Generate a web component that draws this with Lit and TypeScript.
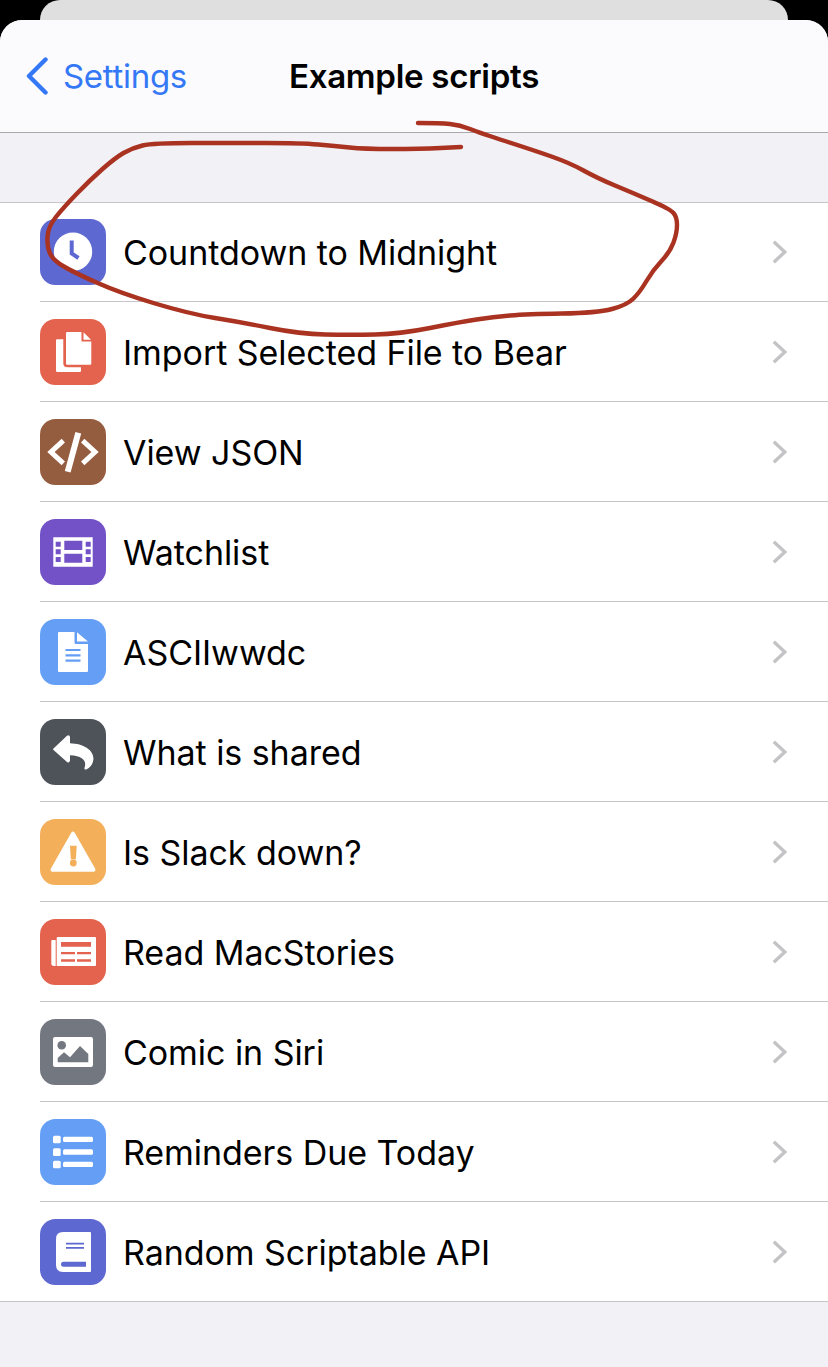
import { LitElement, css, html, svg } from 'lit';
import { customElement } from 'lit/decorators.js';

const INDIGO = '#5d68d0';
const RED = '#e4634e';
const BROWN = '#955d3f';
const PURPLE = '#7351c7';
const BLUE = '#659ff5';
const SLATE = '#4d5359';
const ORANGE = '#f3af5a';
const GREY = '#737780';

// glyphs are drawn in the 66x66 box of the rounded tile
const rows = [
  {
    name: 'Countdown to Midnight',
    color: INDIGO,
    glyph: svg`<circle cx="33" cy="32.7" r="19.2" fill="#fff"/>
      <path d="M31.7 21.5V34.5L38.5 39" fill="none" stroke="${INDIGO}" stroke-width="4"/>`,
  },
  {
    name: 'Import Selected File to Bear',
    color: RED,
    glyph: svg`<path d="M16 21.5q0-1.2 1.2-1.2H23.3V44.3q0 4 4 4H41V51.8q0 1.2-1.2 1.2H17.2q-1.2 0-1.2-1.2z" fill="#fff"/>
      <path d="M26 14.2q0-1.2 1.2-1.2H41.5V22.5H51.3V44.5q0 1.2-1.2 1.2H27.2q-1.2 0-1.2-1.2z" fill="#fff"/>
      <path d="M43.5 13.3L51 20.8H43.5z" fill="#fff"/>`,
  },
  {
    name: 'View JSON',
    color: BROWN,
    glyph: svg`<path d="M23.3 21.7L11 33L23.3 44.3M42.7 21.7L55 33L42.7 44.3" fill="none" stroke="#fff" stroke-width="5"/>
      <path d="M38.3 13.7L27.7 52.7" fill="none" stroke="#fff" stroke-width="6"/>`,
  },
  {
    name: 'Watchlist',
    color: PURPLE,
    glyph: svg`<path fill-rule="evenodd" fill="#fff" d="M13.3 18.3H52.7V47.7H13.3z
      M15.7 22.7h5v5h-5z M15.7 30.3h5v5h-5z M15.7 38h5v5h-5z
      M45.7 22.7h5v5h-5z M45.7 30.3h5v5h-5z M45.7 38h5v5h-5z
      M24.3 21.7h18v9.3h-18z M24.3 34.7h18v9h-18z"/>`,
  },
  {
    name: 'ASCIIwwdc',
    color: BLUE,
    glyph: svg`<path d="M18 14q0-1 1-1H34.5V23.5q0 1.5 1.5 1.5H48V52q0 1-1 1H19q-1 0-1-1z" fill="#fff"/>
      <path d="M37 13.3L48 22.5H37z" fill="#fff"/>
      <path d="M25.5 31h15M25.5 36.3h15M25.5 41.7h15" stroke="${BLUE}" stroke-width="2.2"/>`,
  },
  {
    name: 'What is shared',
    color: SLATE,
    glyph: svg`<path d="M13.5 29.5L27 16.7q2.4-1.6 3 1.3V24.2C44 24.6 54.2 31.5 53.4 40.5 53 45 50 49 46.3 50.4q-2.6.6-1.7-2C46.6 43 44 36.8 30 36.3V41.8q-.8 2.8-3 1.3L13.5 31q-.8-.8 0-1.5z" fill="#fff"/>`,
  },
  {
    name: 'Is Slack down?',
    color: ORANGE,
    glyph: svg`<path d="M33 14.7L53.5 50.7H12.5z" fill="#fff" stroke="#fff" stroke-width="4" stroke-linejoin="round"/>
      <path d="M30 26.7h6.7L35.9 40.3H30.8z" fill="${ORANGE}"/>
      <circle cx="33.3" cy="44" r="3.4" fill="${ORANGE}"/>`,
  },
  {
    name: 'Read MacStories',
    color: RED,
    glyph: svg`<path d="M16.7 19q0-1 1-1H55q1 0 1 1V46q0 1-1 1H16.7z" fill="#fff"/>
      <path d="M11.3 22q0-1 1-1h3.4V47H14q-2.7 0-2.7-2.7z" fill="#fff"/>
      <path d="M21 23h30v4.7H21zM21 33h14v2.3H21zM37 33h14v2.3H37zM21 40.3h14v2.4H21zM37 40.3h14v2.4H37z" fill="${RED}"/>`,
  },
  {
    name: 'Comic in Siri',
    color: GREY,
    glyph: svg`<rect x="13" y="18" width="40" height="30" rx="2" fill="#fff"/>
      <circle cx="21.7" cy="26.3" r="4.3" fill="${GREY}"/>
      <path d="M17.7 43.3V39L24 33.3L30 38.3L40 27L48.3 35V43.3z" fill="${GREY}"/>`,
  },
  {
    name: 'Reminders Due Today',
    color: BLUE,
    glyph: svg`<g fill="#fff">
      <rect x="13" y="16.7" width="7.7" height="7.6" rx="1.5"/>
      <rect x="13" y="29.3" width="7.7" height="7.7" rx="1.5"/>
      <rect x="13" y="41.7" width="7.7" height="7.6" rx="1.5"/>
      <rect x="23" y="17.7" width="30" height="5.4" rx="1.5"/>
      <rect x="23" y="30.3" width="30" height="5.4" rx="1.5"/>
      <rect x="23" y="42.7" width="30" height="5.4" rx="1.5"/>
    </g>`,
  },
  {
    name: 'Random Scriptable API',
    color: INDIGO,
    glyph: svg`<path d="M16 20q0-7 7-7H50q1 0 1 1V52q0 1-1 1H23q-7 0-7-7z" fill="#fff"/>
      <path d="M26 23.7h18v1.7H26zM26 28h18v1.7H26z" fill="${INDIGO}"/>
      <path d="M23.5 42.7H46V47.7H23.5q-2.5 0-2.5-2.5t2.5-2.5z" fill="${INDIGO}"/>
      <path d="M46 47.7h1.5V53H46z" fill="#fff"/>`,
  },
];

// the red pen circle drawn over the screenshot
const penPoints = [
  [418, 123], [440, 123], [460, 125], [480, 133], [533, 150], [570, 163], [597, 178], [633, 193],
  [670, 209], [677, 217], [677, 233], [670, 252], [653, 270], [640, 292], [627, 305], [597, 313],
  [527, 314], [493, 317], [460, 322], [400, 334], [350, 335], [300, 334], [240, 322], [190, 314],
  [120, 293], [73, 272], [53, 260], [47, 247], [48, 227], [63, 208], [90, 180], [115, 158],
  [132, 148], [153, 143], [230, 143], [301, 143], [335, 146], [364, 149], [420, 149], [461, 147],
];

function smoothPath(pts: number[][]) {
  let d = `M${pts[0][0]} ${pts[0][1]}`;
  for (let i = 1; i < pts.length - 1; i++) {
    const mx = (pts[i][0] + pts[i + 1][0]) / 2;
    const my = (pts[i][1] + pts[i + 1][1]) / 2;
    d += `Q${pts[i][0]} ${pts[i][1]} ${mx} ${my}`;
  }
  const last = pts[pts.length - 1];
  return d + `L${last[0]} ${last[1]}`;
}

@customElement('app-root')
class AppRoot extends LitElement {
  static styles = css`
    :host {
      display: flex;
      flex-direction: column;
      position: relative;
      height: 100vh;
      overflow: hidden;
      background: #000;
      font-family: Inter, 'Liberation Sans', sans-serif;
      color: #000;
    }

    .behind {
      flex: none;
      height: 20px;
      margin: 0 40px;
      background: #dfdfdf;
      border-radius: 20px 20px 0 0;
    }

    .sheet {
      flex: 1;
      display: flex;
      flex-direction: column;
      background: #f1f1f6;
      border-radius: 22px 22px 0 0;
      overflow: hidden;
    }

    .nav {
      flex: none;
      box-sizing: border-box;
      height: 113px;
      display: grid;
      grid-template-columns: minmax(0, 1fr) auto minmax(0, 1fr);
      align-items: center;
      background: #fbfbfd;
      border-bottom: 1px solid #a9a9ad;
    }

    .back {
      display: flex;
      align-items: center;
      gap: 15px;
      padding-left: 26px;
      color: #3478f6;
      font-size: 33px;
      letter-spacing: -0.3px;
    }

    .back svg {
      display: block;
    }

    .title {
      font-size: 33.1px;
      font-weight: 600;
      letter-spacing: -0.3px;
    }

    .list {
      flex: none;
      position: relative;
      margin-top: 69px;
      background: #fff;
    }

    .list::after {
      content: '';
      position: absolute;
      left: 0;
      right: 0;
      bottom: 0;
      height: 1px;
      background: #c6c6c8;
    }

    .row {
      position: relative;
      height: 100px;
      box-sizing: border-box;
      display: flex;
      align-items: center;
      padding-left: 40px;
    }

    .row::before {
      content: '';
      position: absolute;
      left: 40px;
      right: 0;
      top: -1px;
      height: 1px;
      background: #c6c6c8;
    }

    .row:first-child::before {
      left: 0;
      top: 0;
    }

    .tile {
      flex: none;
      width: 66px;
      height: 66px;
      display: block;
    }

    .name {
      flex: 1;
      margin-left: 17px;
      font-size: 34px;
      letter-spacing: -0.05px;
      white-space: nowrap;
    }

    .chev {
      flex: none;
      margin-right: 41px;
      display: block;
    }

    .pen {
      position: absolute;
      left: 0;
      top: 0;
      pointer-events: none;
    }
  `;

  render() {
    return html`
      <div class="behind"></div>
      <div class="sheet">
        <div class="nav">
          <div class="back">
            <svg width="22" height="38" viewBox="0 0 22 38">
              <path d="M19.5 2.5L3 19L19.5 35.5" fill="none" stroke="#3478f6" stroke-width="4.4" stroke-linecap="round" stroke-linejoin="round" />
            </svg>
            <span>Settings</span>
          </div>
          <div class="title">Example scripts</div>
          <div></div>
        </div>
        <div class="list">
          ${rows.map(
            (r) => html`
              <div class="row">
                <svg class="tile" viewBox="0 0 66 66">
                  <rect width="66" height="66" rx="15.5" fill="${r.color}" />
                  ${r.glyph}
                </svg>
                <div class="name">${r.name}</div>
                <svg class="chev" width="15" height="24" viewBox="0 0 15 24">
                  <path d="M1.8 1.8L12.8 12L1.8 22.2" fill="none" stroke="#c4c4c7" stroke-width="3.4" />
                </svg>
              </div>
            `
          )}
        </div>
      </div>
      <svg class="pen" width="828" height="1367" viewBox="0 0 828 1367">
        <path d="${smoothPath(penPoints)}" fill="none" stroke="#a93220" stroke-width="4.4" stroke-linecap="round" stroke-linejoin="round" />
      </svg>
    `;
  }
}

export default AppRoot;
